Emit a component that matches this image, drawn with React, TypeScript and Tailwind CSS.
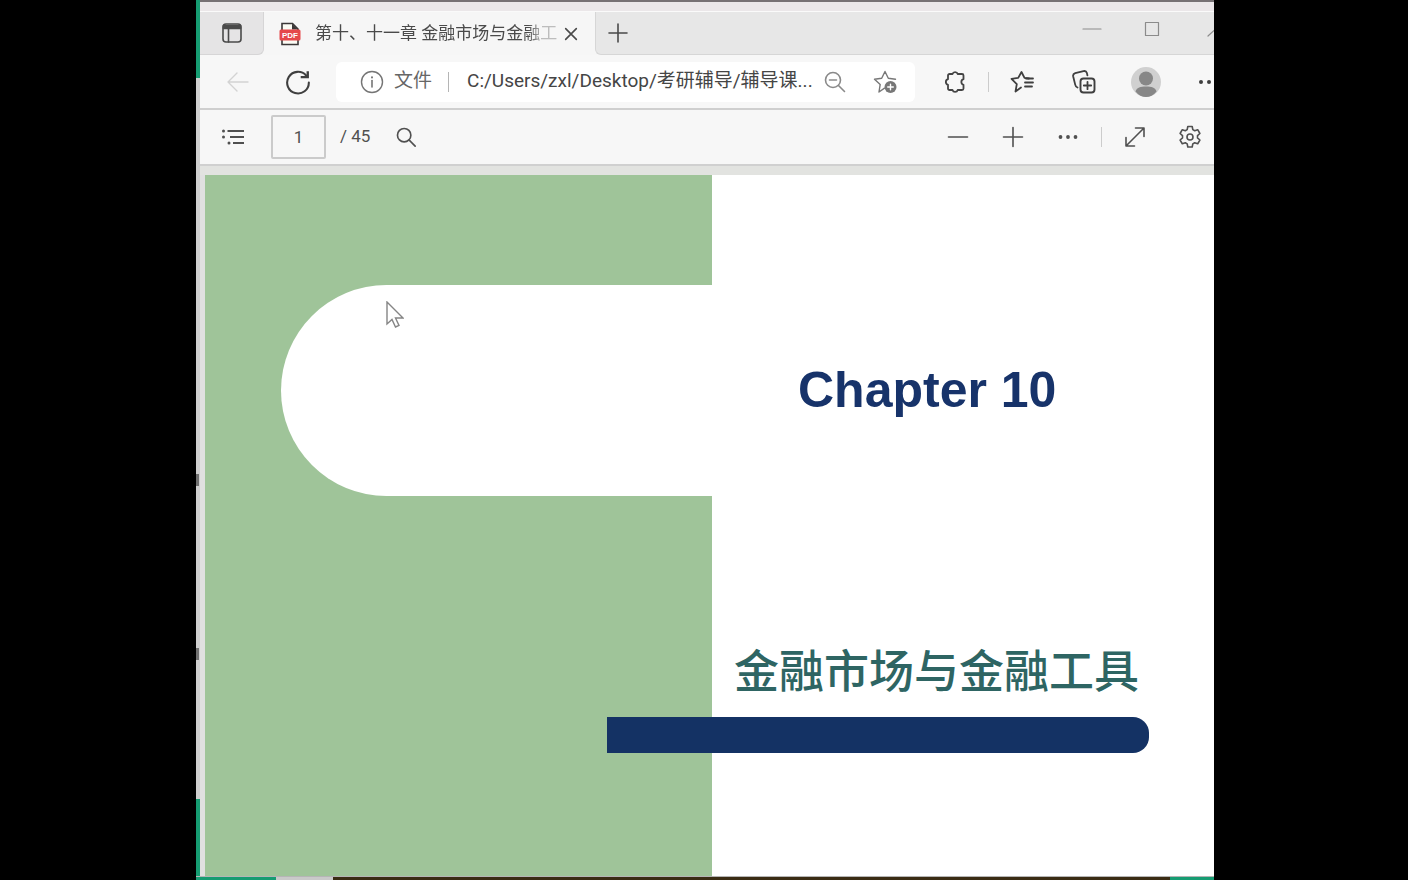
import React from "react";
import clsx from "clsx";

type IconProps = {
  size?: number;
  className?: string;
  children: React.ReactNode;
};

const Icon = ({ size = 24, className, children }: IconProps) => (
  <svg
    width={size}
    height={size}
    viewBox="0 0 24 24"
    fill="none"
    stroke="currentColor"
    strokeWidth={1.6}
    strokeLinecap="round"
    strokeLinejoin="round"
    aria-hidden="true"
    className={clsx("shrink-0", className)}
  >
    {children}
  </svg>
);

type ToolButtonProps = {
  label: string;
  className?: string;
  children: React.ReactNode;
};

const ToolButton = ({ label, className, children }: ToolButtonProps) => (
  <button
    type="button"
    aria-label={label}
    className={clsx(
      "flex h-10 w-11 shrink-0 items-center justify-center",
      className
    )}
  >
    {children}
  </button>
);

const PdfIcon = () => (
  <svg width="22" height="24" viewBox="0 0 22 24" aria-hidden="true">
    <path
      d="M3 1.5h10.5L19 7v15.5H3z"
      fill="#fbfbf4"
      stroke="#3c3838"
      strokeWidth="1.6"
    />
    <path d="M13 1.5 19 7.5h-6z" fill="#3c3838" />
    <rect x="0.5" y="7.5" width="21" height="11" rx="1.5" fill="#e5484a" />
    <text
      x="11"
      y="16"
      textAnchor="middle"
      fontFamily="Liberation Sans, sans-serif"
      fontWeight="700"
      fontSize="8"
      fill="#fff"
    >
      PDF
    </text>
  </svg>
);

const TabStrip = () => (
  <div className="flex h-[43px] overflow-hidden bg-[#f6f6f6] text-[#4a4a4a]">
    <div className="flex w-16 shrink-0 items-center justify-center rounded-br-md border-r border-b border-[#d6d5d6] bg-[#e5e4e5]">
      <button type="button" aria-label="Tab actions" className="ml-px">
        <Icon>
          <rect x="3" y="3" width="18" height="18" rx="3" />
          <path d="M3.5 4.5h17v3h-17z" fill="currentColor" />
          <path d="M8.5 8v13" />
        </Icon>
      </button>
    </div>

    <div className="flex w-[331px] shrink-0 items-center pr-4 pl-[15px]">
      <PdfIcon />
      <span className="ml-[14px] w-[242px] text-[17px] whitespace-nowrap [mask-image:linear-gradient(to_right,black_88%,#0005_94%)]">
        第十、十一章 金融市场与金融工
      </span>
      <button type="button" aria-label="Close tab" className="ml-[6px]">
        <Icon size={16}>
          <path d="M4 4l16 16M20 4L4 20" strokeWidth="2.4" />
        </Icon>
      </button>
    </div>

    <div className="flex min-w-0 flex-1 items-center rounded-bl-md border-b border-l border-[#d6d6d6] bg-[#e7e7e7]">
      <button type="button" aria-label="New tab" className="ml-[10px]">
        <Icon>
          <path d="M3 12h18M12 3v18" />
        </Icon>
      </button>
      <div className="-mr-7 ml-auto flex h-[34px] self-start text-[#8b8b8b]">
        <button
          type="button"
          aria-label="Minimize"
          className="flex w-[60px] items-center justify-center"
        >
          <Icon>
            <path d="M3 12h18" strokeWidth="1.2" />
          </Icon>
        </button>
        <button
          type="button"
          aria-label="Maximize"
          className="flex w-[60px] items-center justify-center"
        >
          <Icon>
            <rect x="5.5" y="5.5" width="13" height="13" strokeWidth="1.2" />
          </Icon>
        </button>
        <button
          type="button"
          aria-label="Close window"
          className="flex w-[60px] items-center justify-center"
        >
          <Icon>
            <path d="M19 9L8 19" strokeWidth="1.2" />
          </Icon>
        </button>
      </div>
    </div>
  </div>
);

const AddressRow = () => (
  <div className="flex h-[55px] items-center gap-4 overflow-hidden border-b-2 border-[#cfcfcf] bg-[#f7f7f7] pl-4 text-[#3f3f3f]">
    <ToolButton label="Back" className="text-[#d3d3d3]">
      <Icon>
        <path d="M22 12H2M11 3l-9 9 9 9" strokeWidth="1.4" />
      </Icon>
    </ToolButton>
    <ToolButton label="Refresh">
      <Icon size={26}>
        <path d="M19.500 6A10 10 0 1 0 22 12.500" strokeWidth="1.900" />
        <path
          d="M21 2v5.500h-6.500"
          strokeWidth="2.200"
          strokeLinecap="butt"
          strokeLinejoin="miter"
        />
      </Icon>
    </ToolButton>

    <div className="flex h-10 min-w-0 flex-1 items-center rounded-md bg-white pr-[18px] pl-6 text-[19px]">
      <Icon className="text-[#757575]">
        <circle cx="12" cy="12" r="10.5" strokeWidth="1.4" />
        <path d="M12 10.5v6.5" />
        <path d="M12 7.2v.2" strokeWidth="2" />
      </Icon>
      <label htmlFor="address" className="ml-[10px] shrink-0 text-[#666666]">
        文件
      </label>
      <span className="mr-[18px] ml-4 h-5 w-px shrink-0 bg-[#b5b5b5]" />
      <input
        id="address"
        type="text"
        defaultValue="C:/Users/zxl/Desktop/考研辅导/辅导课..."
        className="min-w-0 flex-1 bg-transparent text-[#454545] outline-none"
      />
      <button type="button" aria-label="Zoom out" className="ml-2">
        <Icon className="text-[#8a8a8a]">
          <circle cx="10" cy="10" r="7.5" />
          <path d="M15.5 15.5L21.5 21.5M6.5 10h7" />
        </Icon>
      </button>
      <button type="button" aria-label="Add to favorites" className="ml-[26px]">
        <Icon className="text-[#777777]">
          <path
            d="M11.5 18.2 6 22l1.2-7.6L1.5 9.2l7.2-1L12 1.5l3.3 6.7 7.2 1"
            strokeWidth="1.4"
          />
          <circle cx="17.5" cy="17" r="6" fill="currentColor" stroke="none" />
          <path d="M17.5 14.2v5.6M14.7 17h5.6" stroke="#fff" strokeWidth="1.4" />
        </Icon>
      </button>
    </div>

    <div className="-mr-4 ml-[2px] flex shrink-0 items-center">
      <ToolButton label="Extensions">
        <Icon className="text-[#444444]">
          <path
            d="M6.500 4h3a2.700 2.700 0 0 1 5.200 0h4.300a1.500 1.500 0 0 1 1.500 1.500v3.700a2.900 2.900 0 0 0 0 5.600v3.700a1.500 1.500 0 0 1-1.500 1.500h-4.300a2.700 2.700 0 0 1-5.200 0h-3A1.500 1.500 0 0 1 5 18.500v-3.700a2.900 2.900 0 0 1 0-5.600V5.500A1.500 1.500 0 0 1 6.500 4z"
            strokeWidth="1.8"
          />
        </Icon>
      </ToolButton>
      <span className="mx-[11px] h-5 w-px bg-[#cccccc]" />
      <div className="flex items-center gap-[18px]">
        <ToolButton label="Favorites">
          <Icon>
            <path
              d="M11 17.500 5.500 21.500l1.300-7.400L1.500 8.800l6.700-.9L11.500 2l3 5.900 4.500.6"
              strokeWidth="1.8"
            />
            <path d="M16 8.500h7M15 12.500h8M15 16.500h7" strokeWidth="1.8" />
          </Icon>
        </ToolButton>
        <ToolButton label="Collections">
          <Icon>
            <rect x="8.5" y="8.5" width="14" height="14" rx="3" strokeWidth="1.9" />
            <path d="M15.5 11.8v7.4M11.8 15.5h7.4" strokeWidth="1.8" />
            <path
              d="M5.5 17.5c-1.5-.6-2-1.5-2.300-2.900L1.200 6.500C.8 4.700 1.500 3.600 3.200 3.100l8.300-2c1.700-.4 2.900.3 3.400 2l.5 2.200"
              strokeWidth="1.8"
            />
          </Icon>
        </ToolButton>
        <ToolButton label="Profile">
          <svg width="30" height="30" viewBox="0 0 30 30" aria-hidden="true">
            <circle cx="15" cy="15" r="15" fill="#d0d0d0" />
            <circle cx="15" cy="11.5" r="7" fill="#878787" />
            <path
              d="M4.5 24.500c1-4 5-5 10.500-5s9.500 1 10.500 5C22.500 28.500 19 30 15 30s-7.500-1.500-10.500-5.500z"
              fill="#878787"
            />
          </svg>
        </ToolButton>
        <ToolButton label="Settings and more">
          <Icon>
            <g fill="currentColor" stroke="none">
              <circle cx="5" cy="12" r="2" />
              <circle cx="13" cy="12" r="2" />
              <circle cx="21" cy="12" r="2" />
            </g>
          </Icon>
        </ToolButton>
      </div>
    </div>
  </div>
);

const PdfToolbar = () => (
  <div className="flex h-14 items-center border-b-2 border-[#d0d0d0] bg-[#f7f7f7] pr-[2px] pl-[11px] text-[#505050]">
    <ToolButton label="Contents">
      <Icon>
        <path
          d="M6.5 6H23M9 12h14M12 18h11"
          strokeLinecap="butt"
          strokeWidth="1.8"
        />
        <g fill="currentColor" stroke="none">
          <circle cx="2.5" cy="6" r="1.5" />
          <circle cx="2.5" cy="12" r="1.5" />
          <circle cx="8" cy="18" r="1.5" />
        </g>
      </Icon>
    </ToolButton>
    <input
      type="text"
      aria-label="Page number"
      defaultValue="1"
      className="ml-4 h-11 w-[55px] rounded-xs border-2 border-[#cbcbcb] bg-transparent text-center text-[17px] outline-none"
    />
    <span className="ml-[14px] text-[17px]">/ 45</span>
    <ToolButton label="Find" className="ml-[14px]">
      <Icon size={22}>
        <circle cx="10" cy="10" r="7.300" strokeWidth="1.800" />
        <path d="M15.5 15.5L22 22" strokeWidth="1.8" />
      </Icon>
    </ToolButton>

    <div className="ml-auto flex items-center gap-[11px]">
      <ToolButton label="Zoom out page">
        <Icon>
          <path d="M2.5 12h19" />
        </Icon>
      </ToolButton>
      <ToolButton label="Zoom in page">
        <Icon>
          <path d="M2.5 12h19M12 2.5v19" />
        </Icon>
      </ToolButton>
      <ToolButton label="More options">
        <Icon>
          <g fill="currentColor" stroke="none">
            <circle cx="4.5" cy="12" r="1.9" />
            <circle cx="12" cy="12" r="1.9" />
            <circle cx="19.5" cy="12" r="1.9" />
          </g>
        </Icon>
      </ToolButton>
      <span className="h-5 w-px bg-[#cccccc]" />
      <ToolButton label="Full screen">
        <Icon>
          <path d="M3 21L21 3M12.5 3H21v8.500M3 12.500V21h8.500" />
        </Icon>
      </ToolButton>
      <ToolButton label="Settings">
        <Icon>
          <circle cx="12" cy="12" r="3" />
          <path d="M9.800 1.500h4.400l.6 3.100 1.900 1.100 3-1 2.200 3.800-2.400 2.100v2.300l2.400 2.100-2.200 3.800-3-1-1.900 1.100-.6 3.100H9.800l-.6-3.100-1.900-1.100-3 1L2.100 15l2.400-2.100v-2.300L2.100 8.500l2.200-3.800 3 1 1.900-1.100z" />
        </Icon>
      </ToolButton>
    </div>
  </div>
);

const Slide = () => (
  <main className="relative ml-[5px] grid flex-1 grid-cols-[507fr_502fr] bg-white">
    <div className="bg-[#9fc499] pt-[110px]">
      <div className="ml-[76px] h-[211px] rounded-l-full bg-white" />
    </div>
    <div>
      <h1 className="mt-[185px] ml-[86px] text-[50px] leading-[60px] font-bold text-[#17336a]">
        Chapter 10
      </h1>
      <h2 className="mt-[223px] ml-[22px] text-[45px] leading-[60px] font-medium whitespace-nowrap text-[#2e6563]">
        金融市场与金融工具
      </h2>
      <div className="mt-[14px] mr-[65px] -ml-[105px] h-9 rounded-r-2xl bg-[#143264]" />
    </div>

    {/* mouse pointer */}
    <svg
      width="18"
      height="28"
      viewBox="0 0 18 28"
      aria-hidden="true"
      className="absolute top-[126px] left-[181px]"
    >
      <path
        d="M1 1v22l5-4.500 3.500 7.500 3.500-1.500-3.500-7.500H17z"
        fill="#fff"
        stroke="#858585"
        strokeWidth="1.400"
      />
    </svg>
  </main>
);

const App = () => {
  return (
    <div className="flex min-h-screen flex-col bg-black pr-[194px] pl-[196px] font-[Roboto,'Noto_Sans_CJK_SC',sans-serif]">
      <div className="flex flex-1">
        {/* sliver of the desktop behind the window */}
        <div className="flex w-1 shrink-0 flex-col bg-[#cfcfcf]">
          <div className="h-[78px] bg-[#169c72]" />
          <div className="flex flex-1 flex-col justify-center gap-[162px] pt-[256px]">
            <div className="h-3 w-[3px] bg-[#707070]" />
            <div className="h-3 w-[3px] bg-[#707070]" />
          </div>
          <div className="h-[77px] bg-[#169c72]" />
        </div>

        <div className="flex min-w-0 flex-1 flex-col bg-[#e0e0e0]">
          <div className="h-3 border-t-2 border-b border-t-[#777174] border-b-[#fafafa] bg-[#ebe7e9]" />
          <TabStrip />
          <AddressRow />
          <PdfToolbar />
          <div className="h-[9px] bg-[#e2e3e0]" />
          <div className="flex flex-1 flex-col font-['Liberation_Sans','Noto_Sans_CJK_SC',sans-serif]">
            <Slide />
          </div>
        </div>
      </div>

      <div className="flex h-1 border-t border-[#b5b5b5]">
        <div className="w-20 bg-[#169c72]" />
        <div className="w-[57px] bg-[#c9c9c9]" />
        <div className="flex-1 bg-[#3a2c14]" />
        <div className="w-11 bg-[#169c72]" />
      </div>
    </div>
  );
};

export default App;
